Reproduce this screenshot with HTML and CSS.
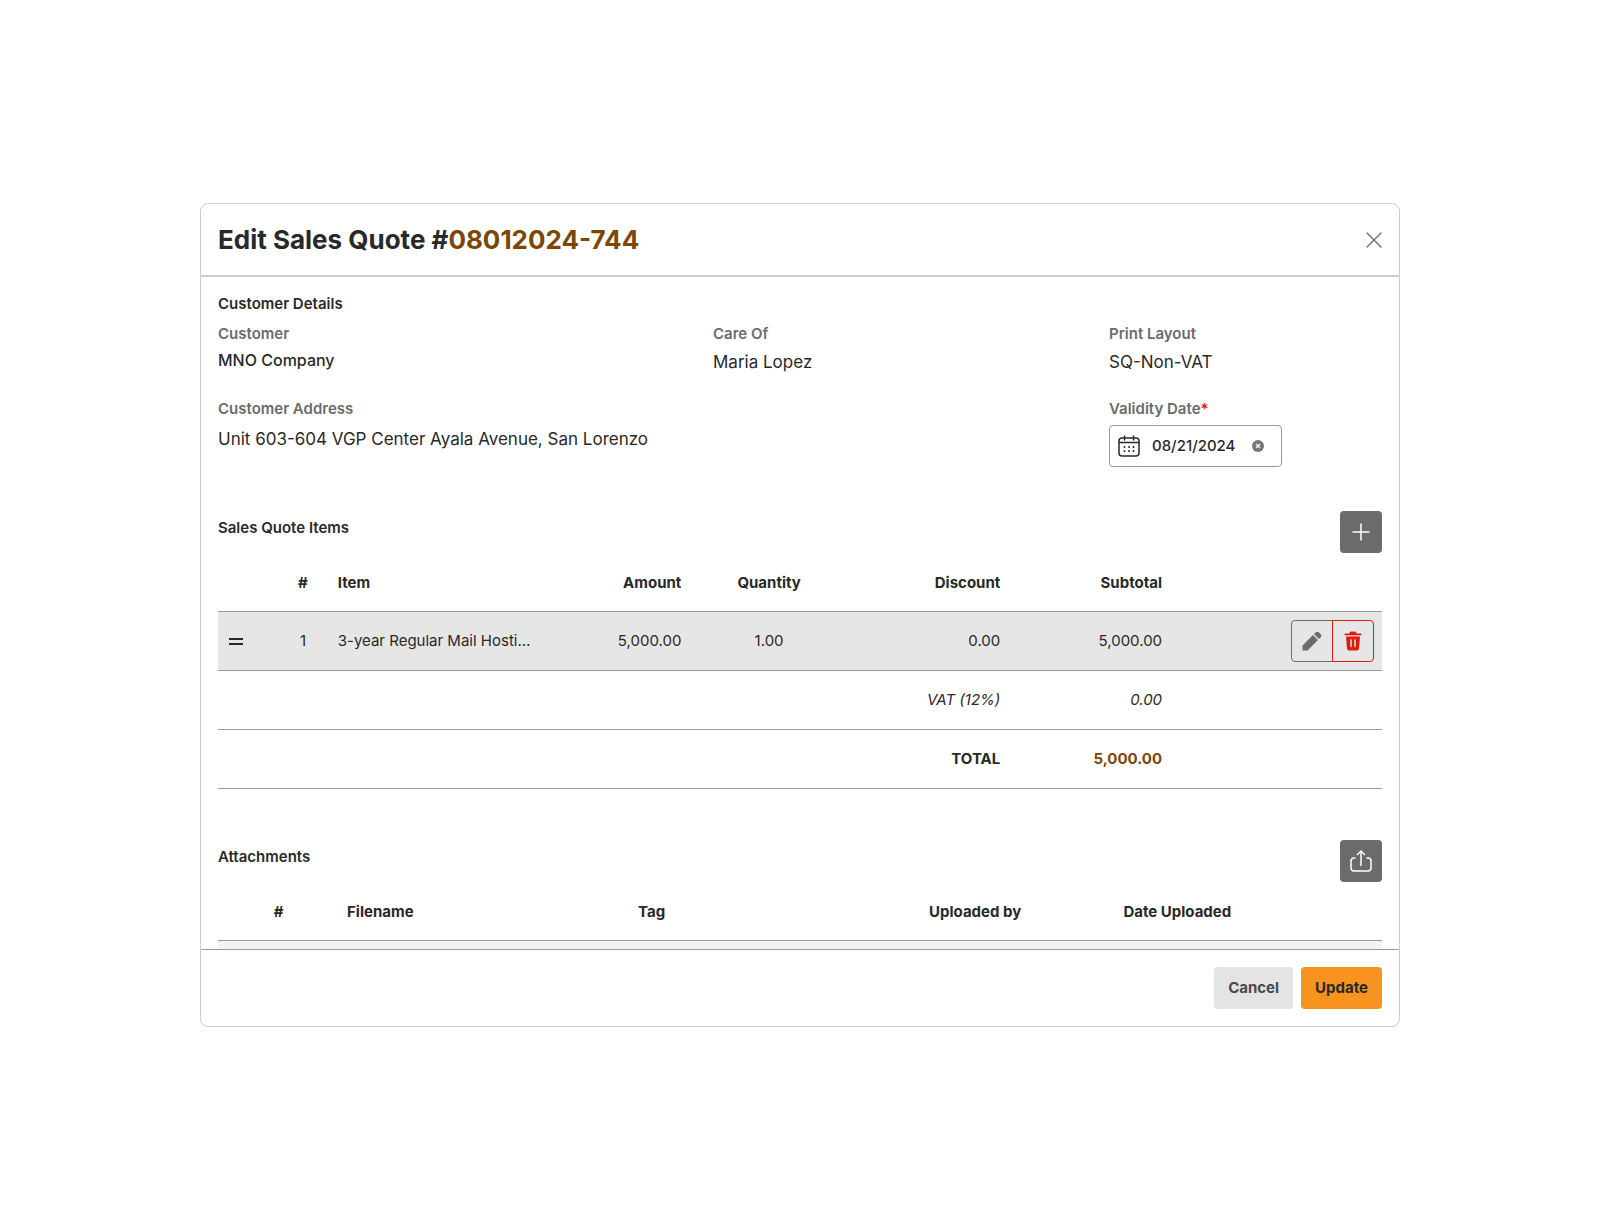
FILE: index.html
```html
<!DOCTYPE html>
<html lang="en">
<head>
    <meta charset="utf-8">
    <title>Edit Sales Quote</title>
    <meta name="viewport" content="width=device-width, initial-scale=1.0">
    <link rel="stylesheet" href="styles.css">
</head>
<body>
    <main class="modal">
        <header class="modal-header">
            <h1 class="modal-title">Edit Sales Quote #<span class="accent">08012024-744</span></h1>
            <button type="button" class="close-btn" aria-label="Close">
                <svg width="16" height="16" viewBox="0 0 16 16" fill="none" stroke="currentColor" stroke-width="1.5" stroke-linecap="round"><path d="M1 1l14 14M15 1L1 15"/></svg>
            </button>
        </header>

        <div class="modal-body">
            <h2 class="section-title">Customer Details</h2>
            <div class="details">
                <div class="field col-5">
                    <span class="label">Customer</span>
                    <span class="value customer">MNO Company</span>
                </div>
                <div class="field col-4">
                    <span class="label">Care Of</span>
                    <span class="value">Maria Lopez</span>
                </div>
                <div class="field col-3">
                    <span class="label">Print Layout</span>
                    <span class="value">SQ-Non-VAT</span>
                </div>
                <div class="field col-9">
                    <span class="label">Customer Address</span>
                    <span class="value address">Unit 603-604 VGP Center Ayala Avenue, San Lorenzo</span>
                </div>
                <div class="field col-3">
                    <label class="label" for="validityDate">Validity Date<span class="required">*</span></label>
                    <div class="date-box">
                        <svg width="22" height="22" viewBox="0 0 22 22" fill="none" stroke="currentColor" stroke-width="1.5" stroke-linecap="round">
                            <rect x="1" y="3" width="20" height="18" rx="3"/>
                            <path d="M1 7.5h20M6.5 1v4M15.5 1v4"/>
                            <path d="M6.5 12h.01M11 12h.01M15.5 12h.01M6.5 16h.01M11 16h.01M15.5 16h.01" stroke-width="2"/>
                        </svg>
                        <input type="text" class="date-input" id="validityDate" value="08/21/2024">
                        <button type="button" class="clear-btn" aria-label="Clear date">
                            <svg width="12" height="12" viewBox="0 0 12 12"><circle cx="6" cy="6" r="6" fill="#777"/><path d="M4 4l4 4M8 4L4 8" stroke="#fff" stroke-width="1.2"/></svg>
                        </button>
                    </div>
                </div>
            </div>

            <div class="section-head">
                <h2 class="section-title">Sales Quote Items</h2>
                <button type="button" class="icon-btn" aria-label="Add item">
                    <svg width="18" height="18" viewBox="0 0 18 18" fill="none" stroke="currentColor" stroke-width="1.5" stroke-linecap="round"><path d="M9 1v16M1 9h16"/></svg>
                </button>
            </div>
            <table class="table items">
                <colgroup>
                    <col class="w-drag"><col class="w-num"><col class="w-item"><col class="w-amount">
                    <col class="w-qty"><col class="w-discount"><col class="w-subtotal"><col>
                </colgroup>
                <thead>
                    <tr>
                        <th></th>
                        <th class="center">#</th>
                        <th>Item</th>
                        <th class="right">Amount</th>
                        <th class="center">Quantity</th>
                        <th class="right">Discount</th>
                        <th class="right">Subtotal</th>
                        <th></th>
                    </tr>
                </thead>
                <tbody>
                    <tr class="active">
                        <td><svg class="grip" width="20" height="12" viewBox="0 0 20 12" fill="none" stroke="currentColor" stroke-width="1.8"><path d="M3 4h14M3 9h14"/></svg></td>
                        <td class="center">1</td>
                        <td>3-year Regular Mail Hosti…</td>
                        <td class="right">5,000.00</td>
                        <td class="center">1.00</td>
                        <td class="right">0.00</td>
                        <td class="right">5,000.00</td>
                        <td>
                            <div class="btn-group">
                                <button type="button" class="edit-btn" aria-label="Edit item">
                                    <svg width="20" height="20" viewBox="0 0 20 20" fill="currentColor"><path d="M.5 14.5L11 4l5 5L5.500 19.500H.5zM12 3l1.500-1.500a2.600 2.600 0 0 1 3.600 0l1.400 1.400a2.600 2.600 0 0 1 0 3.600L17 8z"/></svg>
                                </button>
                                <button type="button" class="delete-btn" aria-label="Delete item">
                                    <svg width="20" height="20" viewBox="0 0 20 20"><path fill="currentColor" d="M6.500 2.500Q6.500.5 8 .5h4q1.500 0 1.500 2h4.200q.8 0 .8.900t-.8.900H2.300q-.8 0-.8-.9t.8-.9zM3 5.500h14l-1 12q-.2 2-2 2H6q-1.800 0-2-2z"/><path d="M8 9v6.500M12 9v6.500" stroke="#e6e6e6" stroke-width="1.5" stroke-linecap="round"/></svg>
                                </button>
                            </div>
                        </td>
                    </tr>
                    <tr class="vat">
                        <td colspan="6" class="right">VAT (12%)</td>
                        <td class="right">0.00</td>
                        <td></td>
                    </tr>
                    <tr class="total">
                        <td colspan="6" class="right">TOTAL</td>
                        <td class="right accent">5,000.00</td>
                        <td></td>
                    </tr>
                </tbody>
            </table>

            <div class="section-head attachments-head">
                <h2 class="section-title">Attachments</h2>
                <button type="button" class="icon-btn" aria-label="Upload attachment">
                    <svg width="22" height="22" viewBox="0 0 22 22" fill="none" stroke="currentColor" stroke-width="1.5" stroke-linecap="round" stroke-linejoin="round"><path d="M11 15.5V1.5M7.5 4.5l3.500-3.500 3.500 3.500M5 8H4a3 3 0 0 0-3 3v7a3 3 0 0 0 3 3h14a3 3 0 0 0 3-3v-7a3 3 0 0 0-3-3h-1"/></svg>
                </button>
            </div>
            <table class="table files">
                <colgroup>
                    <col class="w-file-num"><col class="w-filename"><col class="w-tag"><col class="w-uploader"><col>
                </colgroup>
                <thead>
                    <tr>
                        <th class="center">#</th>
                        <th>Filename</th>
                        <th>Tag</th>
                        <th>Uploaded by</th>
                        <th>Date Uploaded</th>
                    </tr>
                </thead>
                <tbody>
                    <tr class="striped">
                        <td colspan="5"></td>
                    </tr>
                </tbody>
            </table>
        </div>

        <footer class="modal-footer">
            <button type="button" class="btn cancel">Cancel</button>
            <button type="submit" class="btn update">Update</button>
        </footer>
    </main>
</body>
</html>
```
FILE: styles.css
```css
* {
    box-sizing: border-box;
}

body {
    display: flex;
    justify-content: center;
    height: 100vh;
    margin: 0;
    padding: 203px 0 201px;
    background: #fff;
    color: #292929;
    font-family: Inter, "Noto Sans", sans-serif;
    font-size: 15px;
    line-height: 24px;
}

h1,
h2 {
    margin: 0;
}

button,
input {
    font: inherit;
    color: inherit;
    padding: 0;
    border: 0;
    background: none;
}

button {
    cursor: pointer;
}

svg {
    display: block;
    flex: none;
}

.modal {
    display: flex;
    flex-direction: column;
    width: 75%;
    border: 1px solid #ccc;
    border-radius: 8px;
    overflow: hidden;
}

.modal-header {
    display: flex;
    align-items: center;
    justify-content: space-between;
    padding: 18px 17px 17px;
    border-bottom: 2px solid #ccc;
}

.modal-title {
    font-size: 26px;
    line-height: 36px;
    font-weight: 700;
}

.close-btn {
    color: #777;
}

.modal-body {
    flex: 1;
    min-height: 0;
    padding: 15px 17px;
    overflow-y: auto;
    scrollbar-width: none;
}

.section-title {
    font-size: 15px;
    line-height: 24px;
    font-weight: 600;
}

.accent {
    color: #7d4607;
}

/* customer details */
.details {
    display: grid;
    grid-template-columns: repeat(12, 1fr);
    gap: 23px 24px;
    margin-top: 6px;
}

.col-3 { grid-column: span 3; }
.col-4 { grid-column: span 4; }
.col-5 { grid-column: span 5; }
.col-9 { grid-column: span 9; }

.field {
    display: flex;
    flex-direction: column;
    align-items: flex-start;
    gap: 4px;
}

.label {
    color: #6b6b6b;
    font-weight: 600;
}

.required {
    color: #e11b0c;
}

.value {
    font-size: 17px;
}

.value.customer {
    font-size: 16px;
    line-height: 20px;
    font-weight: 500;
}

.value.address {
    line-height: 28px;
}

.date-box {
    display: flex;
    align-items: center;
    width: 173px;
    height: 42px;
    padding: 0 8px;
    border: 1px solid #999;
    border-radius: 4px;
}

.date-input {
    width: 84px;
    margin: 0 16px 0 12px;
    outline: none;
    font-weight: 500;
}

/* section headings */
.section-head {
    display: flex;
    align-items: flex-start;
    justify-content: space-between;
    margin-top: 44px;
}

.section-head .section-title {
    line-height: 34px;
}

.attachments-head {
    margin-top: 51px;
}

.icon-btn {
    display: grid;
    place-items: center;
    width: 42px;
    height: 42px;
    border-radius: 4px;
    background: #6b6b6b;
    color: #fff;
}

/* tables */
.table {
    width: 100%;
    table-layout: fixed;
    border-collapse: separate;
    border-spacing: 0;
}

.table th,
.table td {
    height: 59px;
    padding: 0 8px;
    border-bottom: 1px solid #999;
    text-align: left;
    white-space: nowrap;
}

.table th {
    padding-top: 2px;
    font-weight: 700;
}

.table .center {
    text-align: center;
}

.table .right {
    text-align: right;
}

.active {
    background: #e6e6e6;
}

.striped {
    background: #f2f2f2;
}

.vat {
    font-style: italic;
}

.total {
    font-weight: 700;
}

.w-drag { width: 5%; }
.w-num { width: 4.6%; }
.w-item { width: 17.6%; }
.w-amount { width: 13.3%; }
.w-qty { width: 13.7%; }
.w-discount { width: 13.7%; }
.w-subtotal { width: 13.9%; }

.w-file-num { width: 10.4%; }
.w-filename { width: 25%; }
.w-tag { width: 25%; }
.w-uploader { width: 16.7%; }

.btn-group {
    display: flex;
    justify-content: flex-end;
}

.edit-btn,
.delete-btn {
    display: grid;
    place-items: center;
    width: 42px;
    height: 42px;
    border: 1px solid #6b6b6b;
    border-radius: 4px 0 0 4px;
    color: #6b6b6b;
}

.delete-btn {
    margin-left: -1px;
    border-color: #e11b0c;
    border-radius: 0 4px 4px 0;
    color: #e11b0c;
}

/* footer */
.modal-footer {
    display: flex;
    justify-content: flex-end;
    gap: 8px;
    padding: 17px;
    border-top: 1px solid #999;
}

.btn {
    height: 42px;
    padding: 0 14px;
    border-radius: 4px;
    font-weight: 700;
}

.cancel {
    background: #e4e4e4;
    color: #4a4a4a;
}

.update {
    background: #f7931e;
}
```
